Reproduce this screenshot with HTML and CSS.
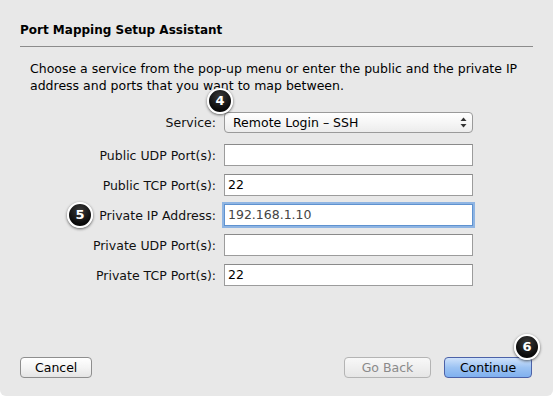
FILE: index.html
```html
<!DOCTYPE html>
<html lang="en">
<head>
    <meta charset="UTF-8">
    <title>Port Mapping Setup Assistant</title>
    <link rel="stylesheet" href="styles.css">
</head>
<body>

    <div class="sheet">
        <h1 class="title">Port Mapping Setup Assistant</h1>

        <p class="intro">Choose a service from the pop-up menu or enter the public and the private IP address and ports that you want to map between.</p>

        <div class="form">
            <div class="row row-select">
                <label>Service:</label>
                <div class="popup">
                    <span>Remote Login – SSH</span>
                    <svg class="arrows" width="7" height="11" viewBox="0 0 7 11">
                        <path d="M3.5 0.5 L6.5 4 L0.5 4 Z" fill="#333"/>
                        <path d="M3.5 10.5 L6.5 7 L0.5 7 Z" fill="#333"/>
                    </svg>
                </div>
                <span class="badge badge-4">4</span>
            </div>
            <div class="row">
                <label>Public UDP Port(s):</label>
                <div class="field"></div>
            </div>
            <div class="row">
                <label>Public TCP Port(s):</label>
                <div class="field">22</div>
            </div>
            <div class="row">
                <span class="badge badge-5">5</span>
                <label>Private IP Address:</label>
                <div class="field focus">192.168.1.10</div>
            </div>
            <div class="row">
                <label>Private UDP Port(s):</label>
                <div class="field"></div>
            </div>
            <div class="row">
                <label>Private TCP Port(s):</label>
                <div class="field">22</div>
            </div>
        </div>

        <div class="buttons">
            <div class="btn">Cancel</div>
            <div class="spacer"></div>
            <div class="btn btn-back">Go Back</div>
            <div class="btn btn-continue">Continue
                <span class="badge badge-6">6</span>
            </div>
        </div>
    </div>

</body>
</html>
```

FILE: styles.css
```css
* {
    margin: 0;
    padding: 0;
    box-sizing: border-box;
}

body {
    width: 553px;
    height: 397px;
    background: #ffffff;
    font-family: "Lucida Grande", "DejaVu Sans", sans-serif;
    font-size: 12.5px;
    color: #000;
}

.sheet {
    position: relative;
    width: 553px;
    height: 396px;
    background: #e8e8e8;
    border-radius: 0 0 6px 6px;
    padding: 23px 20px 0 20px;
}

.title {
    font-size: 12px;
    font-weight: bold;
    line-height: 15px;
    padding-bottom: 8px;
    border-bottom: 1px solid #8c8c8c;
}

.intro {
    padding: 13px 10px 0 10px;
    line-height: 17px;
}

.form {
    margin-top: 18px;
    display: flex;
    flex-direction: column;
    gap: 8px;
}

.row {
    position: relative;
    display: flex;
    align-items: center;
    gap: 8px;
    height: 22px;
}

.row-select {
    height: 21px;
    margin-bottom: 3px;
}

.row label {
    width: 196px;
    text-align: right;
    color: #111;
}

.field {
    width: 249px;
    height: 22px;
    background: #fff;
    border: 1px solid #9c9c9c;
    border-top-color: #8a8a8a;
    padding-left: 3px;
    line-height: 20px;
}

.field.focus {
    border: 1px solid #5f92cf;
    box-shadow: 0 0 0 2px #8fb5e3;
    color: #444;
}

.popup {
    width: 249px;
    height: 21px;
    border: 1px solid #9a9a9a;
    border-radius: 4px;
    background: linear-gradient(#ffffff, #f6f6f6 50%, #ececec);
    padding-left: 8px;
    padding-right: 5px;
    display: flex;
    align-items: center;
    justify-content: space-between;
}

.badge {
    position: absolute;
    width: 26px;
    height: 26px;
    border-radius: 50%;
    background: radial-gradient(circle at 50% 30%, #3a3a3a, #0a0a0a 70%);
    border: 2px solid #fff;
    box-shadow: 0 1px 3px rgba(0, 0, 0, 0.6);
    color: #fff;
    font-weight: bold;
    font-size: 13px;
    line-height: 22px;
    text-align: center;
}

.badge-4 {
    left: 187px;
    top: -24px;
}

.badge-5 {
    left: 47px;
    top: -2px;
}

.badge-6 {
    right: -9px;
    top: -24px;
}

.buttons {
    position: absolute;
    left: 20px;
    right: 21px;
    top: 357px;
    display: flex;
    gap: 13px;
}

.spacer {
    flex: 1;
}

.btn {
    position: relative;
    height: 21px;
    min-width: 69px;
    padding: 0 14px;
    border: 1px solid #8e8e8e;
    border-radius: 4px;
    background: linear-gradient(#ffffff, #f4f4f4 50%, #e4e4e4);
    text-align: center;
    line-height: 19px;
}

.btn-back {
    width: 87px;
    color: #8a8a8a;
    border-color: #b4b4b4;
    background: linear-gradient(#f8f8f8, #efefef 50%, #e6e6e6);
}

.btn-continue {
    width: 88px;
    border-color: #4c62a8;
    background: linear-gradient(#cfe2fb, #9cc3f3 50%, #7fb0ef);
}
```
